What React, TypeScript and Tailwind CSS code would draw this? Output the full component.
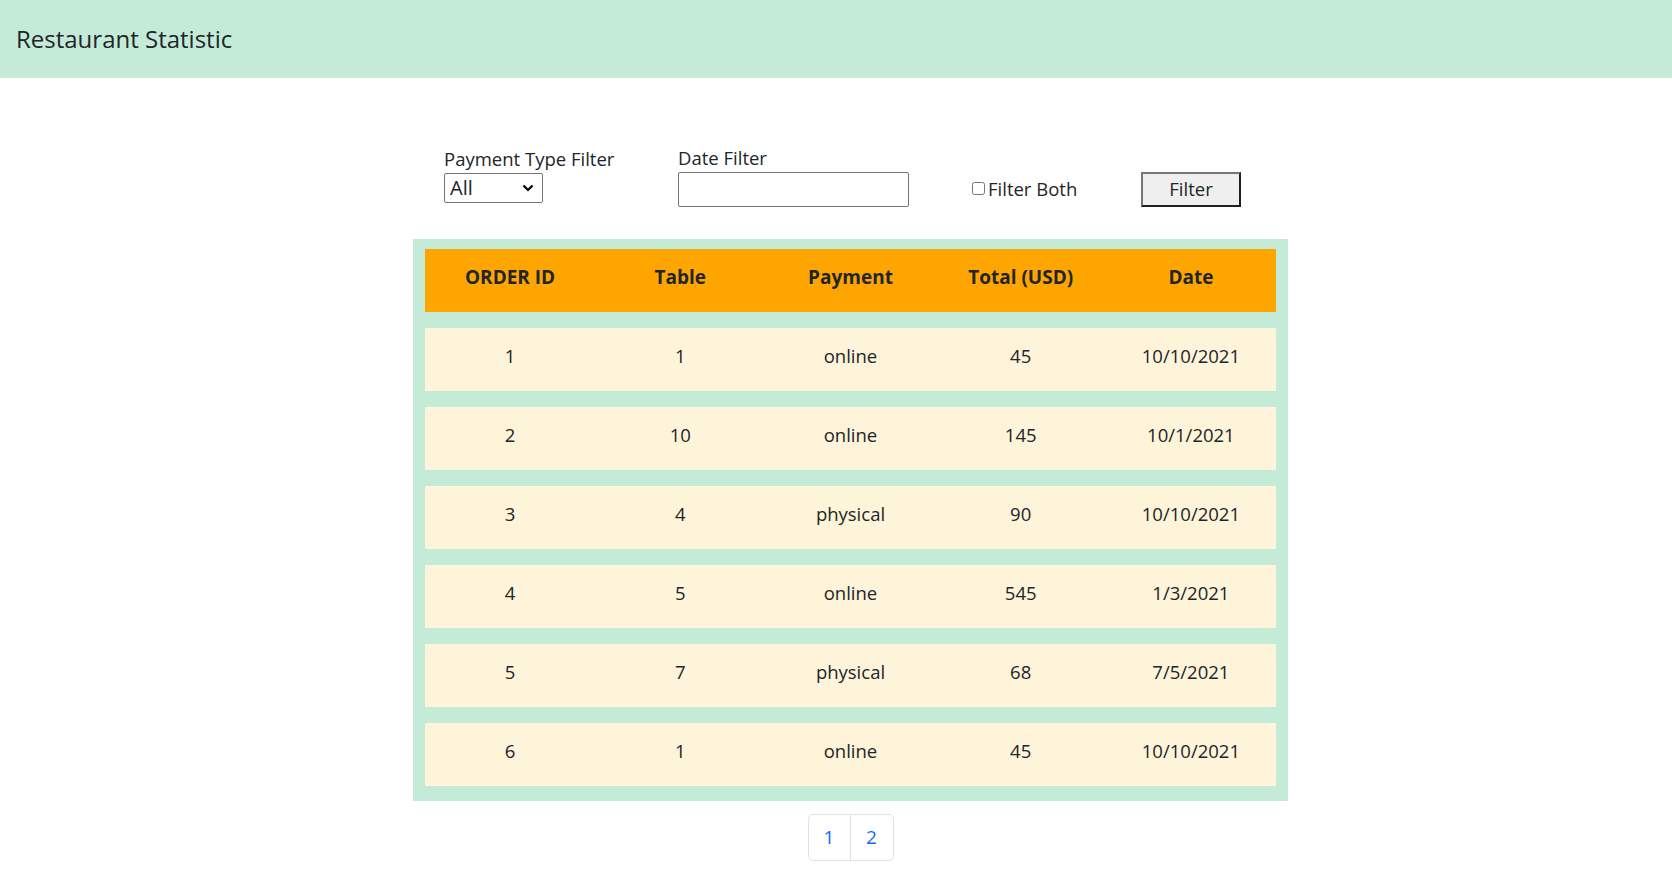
import React from "react";

const orders = [
  { id: 1, table: 1, payment: "online", total: 45, date: "10/10/2021" },
  { id: 2, table: 10, payment: "online", total: 145, date: "10/1/2021" },
  { id: 3, table: 4, payment: "physical", total: 90, date: "10/10/2021" },
  { id: 4, table: 5, payment: "online", total: 545, date: "1/3/2021" },
  { id: 5, table: 7, payment: "physical", total: 68, date: "7/5/2021" },
  { id: 6, table: 1, payment: "online", total: 45, date: "10/10/2021" },
];

const columns = ["ORDER ID", "Table", "Payment", "Total (USD)", "Date"];

export default function App() {
  return (
    <div className="min-h-screen bg-white text-[#212529] font-['Open_Sans',sans-serif]">
      {/* Header */}
      <header className="h-[78px] bg-[#c3ebd8] flex items-center px-4 pb-[1px]">
        <h4 className="text-[24px] font-medium">Restaurant Statistic</h4>
      </header>

      <div className="w-[875px] ml-[413px] pt-[67px]">
        {/* Filters */}
        <div className="flex items-end text-[18.5px]">
          <div className="ml-[31px] flex flex-col w-[234px]">
            <label className="leading-[26px] mb-[1px]">Payment Type Filter</label>
            <div className="relative w-[99px] h-[30px] mb-[4px]">
              <select className="appearance-none w-full h-full border border-[#767676] rounded-[2px] pl-[5px] text-[20px] leading-none bg-white">
                <option>All</option>
                <option>online</option>
                <option>physical</option>
              </select>
              <svg
                viewBox="0 0 12 8"
                className="absolute right-[9px] top-[11px] w-[12px] h-[8px] pointer-events-none"
              >
                <path d="M1.5 1.5l4.5 4.5 4.5-4.5" fill="none" stroke="#000" strokeWidth="2.2" />
              </svg>
            </div>
          </div>
          <div className="flex flex-col w-[294px]">
            <label className="leading-[26px] mb-[1px]">Date Filter</label>
            <input className="w-[231px] h-[35px] border border-[#767676] rounded-[2px] bg-white" />
          </div>
          <label className="flex items-center h-[35px] w-[169px] pb-[2px]">
            <input type="checkbox" className="w-[13px] h-[13px] m-0 mr-[3px]" />
            Filter Both
          </label>
          <button className="w-[100px] h-[35px] pb-[2px] bg-[#efefef] border-2 border-t-[#767676] border-l-[#767676] border-r-[#1f1f1f] border-b-[#1f1f1f] text-[18.5px]">
            Filter
          </button>
        </div>

        {/* Table */}
        <div className="mt-[32px] bg-[#c3ebd8] px-[12px] pt-[10px] pb-[15px] flex flex-col gap-[16px]">
          <div className="grid grid-cols-5 h-[63px] pb-[7px] bg-[#ffa500] items-center text-center font-bold text-[19px]">
            {columns.map((c) => (
              <div key={c}>{c}</div>
            ))}
          </div>
          {orders.map((o) => (
            <div
              key={o.id}
              className="grid grid-cols-5 h-[63px] pb-[7px] bg-[#fef4d9] items-center text-center text-[18.5px]"
            >
              <div>{o.id}</div>
              <div>{o.table}</div>
              <div>{o.payment}</div>
              <div>{o.total}</div>
              <div>{o.date}</div>
            </div>
          ))}
        </div>

        {/* Pagination */}
        <div className="flex justify-center mt-[13px]">
          <div className="flex border border-[#dee2e6] rounded-[5px] h-[47px] text-[#0d6efd] text-[19px]">
            <button className="w-[42px] flex items-center justify-center border-r border-[#dee2e6]">1</button>
            <button className="w-[42px] flex items-center justify-center">2</button>
          </div>
        </div>
      </div>
    </div>
  );
}
